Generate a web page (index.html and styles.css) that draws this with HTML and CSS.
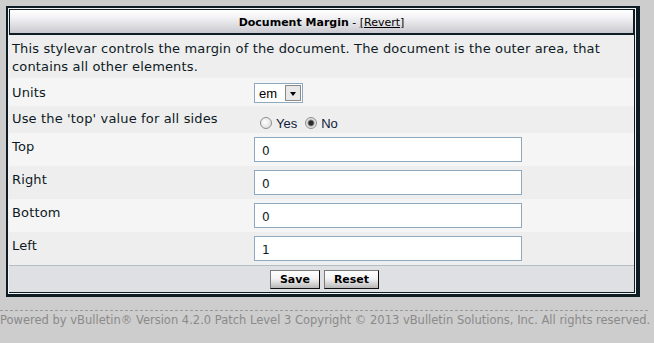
FILE: index.html
```html
<!DOCTYPE html>
<html lang="en">

<head>
  <meta charset="UTF-8" />
  <title>Document Margin</title>
  <link rel="stylesheet" href="styles.css">
</head>

<body>
  <div class="tborder">
    <div class="inner">
      <div class="tcat">
        <span><strong>Document Margin</strong> - <a href="#">[Revert]</a></span>
      </div>

      <div class="row alt1 desc">
        This stylevar controls the margin of the document. The document is the outer area, that contains all other elements.
      </div>

      <div class="row alt2 units">
        <div class="label">Units</div>
        <div class="value">
          <span class="select">
            <select>
              <option>em</option>
              <option>px</option>
              <option>%</option>
            </select>
            <span class="arrow"></span>
          </span>
        </div>
      </div>

      <div class="row alt1 short">
        <div class="label">Use the 'top' value for all sides</div>
        <div class="value radios">
          <label><input type="radio" name="same"> Yes</label>
          <label><input type="radio" name="same" checked> No</label>
        </div>
      </div>

      <div class="row alt2">
        <div class="label">Top</div>
        <div class="value"><input class="text" type="text" value="0"></div>
      </div>

      <div class="row alt1">
        <div class="label">Right</div>
        <div class="value"><input class="text" type="text" value="0"></div>
      </div>

      <div class="row alt2">
        <div class="label">Bottom</div>
        <div class="value"><input class="text" type="text" value="0"></div>
      </div>

      <div class="row alt1">
        <div class="label">Left</div>
        <div class="value"><input class="text" type="text" value="1"></div>
      </div>

      <div class="tfoot">
        <button class="button">Save</button>
        <button class="button">Reset</button>
      </div>
    </div>
  </div>

  <div class="copyright">
    Powered by vBulletin&reg; Version 4.2.0 Patch Level 3 Copyright &copy; 2013 vBulletin Solutions, Inc. All rights reserved.
  </div>
</body>

</html>
```

FILE: styles.css
```css
* {
  box-sizing: border-box;
}

body {
  margin: 0;
  padding: 6px 0 0 6px;
  background: #cdcdcd;
  font-family: "DejaVu Sans", Verdana, sans-serif;
  font-size: 13px;
  letter-spacing: 0.15px;
  color: #0d1a24;
}

.tborder {
  width: 634px;
  border: 2px solid #0e1c24;
  border-right-width: 4px;
  border-bottom-width: 3px;
  background: #f2f2f2;
  padding: 1px;
}

.inner {
  border-right: 1px solid #0e1c24;
  border-bottom: 1px solid #0e1c24;
  background: #dfe0e4;
}

.tcat {
  height: 26px;
  display: flex;
  align-items: center;
  justify-content: center;
  font-size: 11px;
  letter-spacing: 0;
  color: #000;
  background: linear-gradient(#ffffff, #f4f4f6 30%, #c9c9d0);
  border: 1px solid #0e1c24;
  border-bottom-width: 2px;
  padding-top: 1px;
}

.tcat a {
  color: #000;
}

.row {
  display: flex;
  height: 33px;
}

.row.units {
  height: 28px;
}

.row.short {
  height: 27px;
}

.alt1 {
  background: #eeeeee;
}

.alt2 {
  background: #f5f5f5;
}

.desc {
  display: block;
  height: 43px;
  padding: 5px 6px 0 3px;
  line-height: 18px;
}

.label {
  width: 245px;
  padding: 6px 0 0 3px;
  line-height: 16px;
}

.units .label {
  padding-top: 7px;
}

.short .label {
  padding-top: 5px;
}

.value {
  padding-top: 4px;
}

.select {
  display: inline-flex;
  height: 20px;
  width: 49px;
  border: 1px solid #8ea9bd;
  background: #fff;
  margin-top: 1px;
}

.select select {
  appearance: none;
  border: 0;
  background: transparent;
  font-family: "Liberation Sans", Arial, sans-serif;
  font-size: 13px;
  color: #000;
  width: 31px;
  padding: 0 0 0 4px;
  outline: none;
}

.arrow {
  width: 16px;
  margin: 1px 1px 1px 0;
  background: #e8e8e8;
  border: 1px solid #8a8a8a;
  position: relative;
}

.arrow::after {
  content: "";
  position: absolute;
  left: 4px;
  top: 6px;
  border-left: 3px solid transparent;
  border-right: 3px solid transparent;
  border-top: 4px solid #000;
}

.radios {
  display: flex;
  gap: 8px;
  padding: 7px 0 0 6px;
  font-family: "Liberation Sans", Arial, sans-serif;
  font-size: 13px;
  letter-spacing: 0;
  color: #0d1a3a;
}

.radios label {
  display: flex;
  align-items: center;
  gap: 4px;
}

.radios input {
  appearance: none;
  margin: 0;
  width: 12px;
  height: 12px;
  border: 1px solid #8e8e8e;
  border-radius: 50%;
  background: radial-gradient(circle at 40% 40%, #ffffff, #d6d6d6);
}

.radios input:checked {
  background: radial-gradient(circle, #2a2a2a 0 2px, #8a8a8a 3px, #e8e8e8 4px, #d0d0d0);
}

.text {
  width: 268px;
  height: 25px;
  border: 1px solid #8ea9bd;
  background: #fff;
  font-family: "DejaVu Sans", Verdana, sans-serif;
  font-size: 12px;
  color: #0d1a24;
  padding: 2px 7px 0;
  outline: none;
}

.tfoot {
  display: flex;
  justify-content: center;
  gap: 4px;
  height: 27px;
  padding: 4px 0 0 6px;
  border-top: 1px solid #b4bcc4;
}

.button {
  height: 19px;
  padding: 0 9px;
  font-family: "DejaVu Sans", Verdana, sans-serif;
  font-size: 11px;
  font-weight: bold;
  color: #000;
  background: linear-gradient(#ffffff, #f4f4f4 45%, #b8b8b8);
  border: 1px solid #7a7a7a;
  border-right-color: #111;
  border-bottom-color: #111;
  cursor: pointer;
}

.copyright {
  width: 648px;
  margin: 13px 0 0 -6px;
  padding-top: 2px;
  border-top: 1px dashed #9a9a9a;
  text-align: center;
  font-size: 11.5px;
  letter-spacing: 0;
  color: #8a8a8a;
  white-space: nowrap;
}
```
